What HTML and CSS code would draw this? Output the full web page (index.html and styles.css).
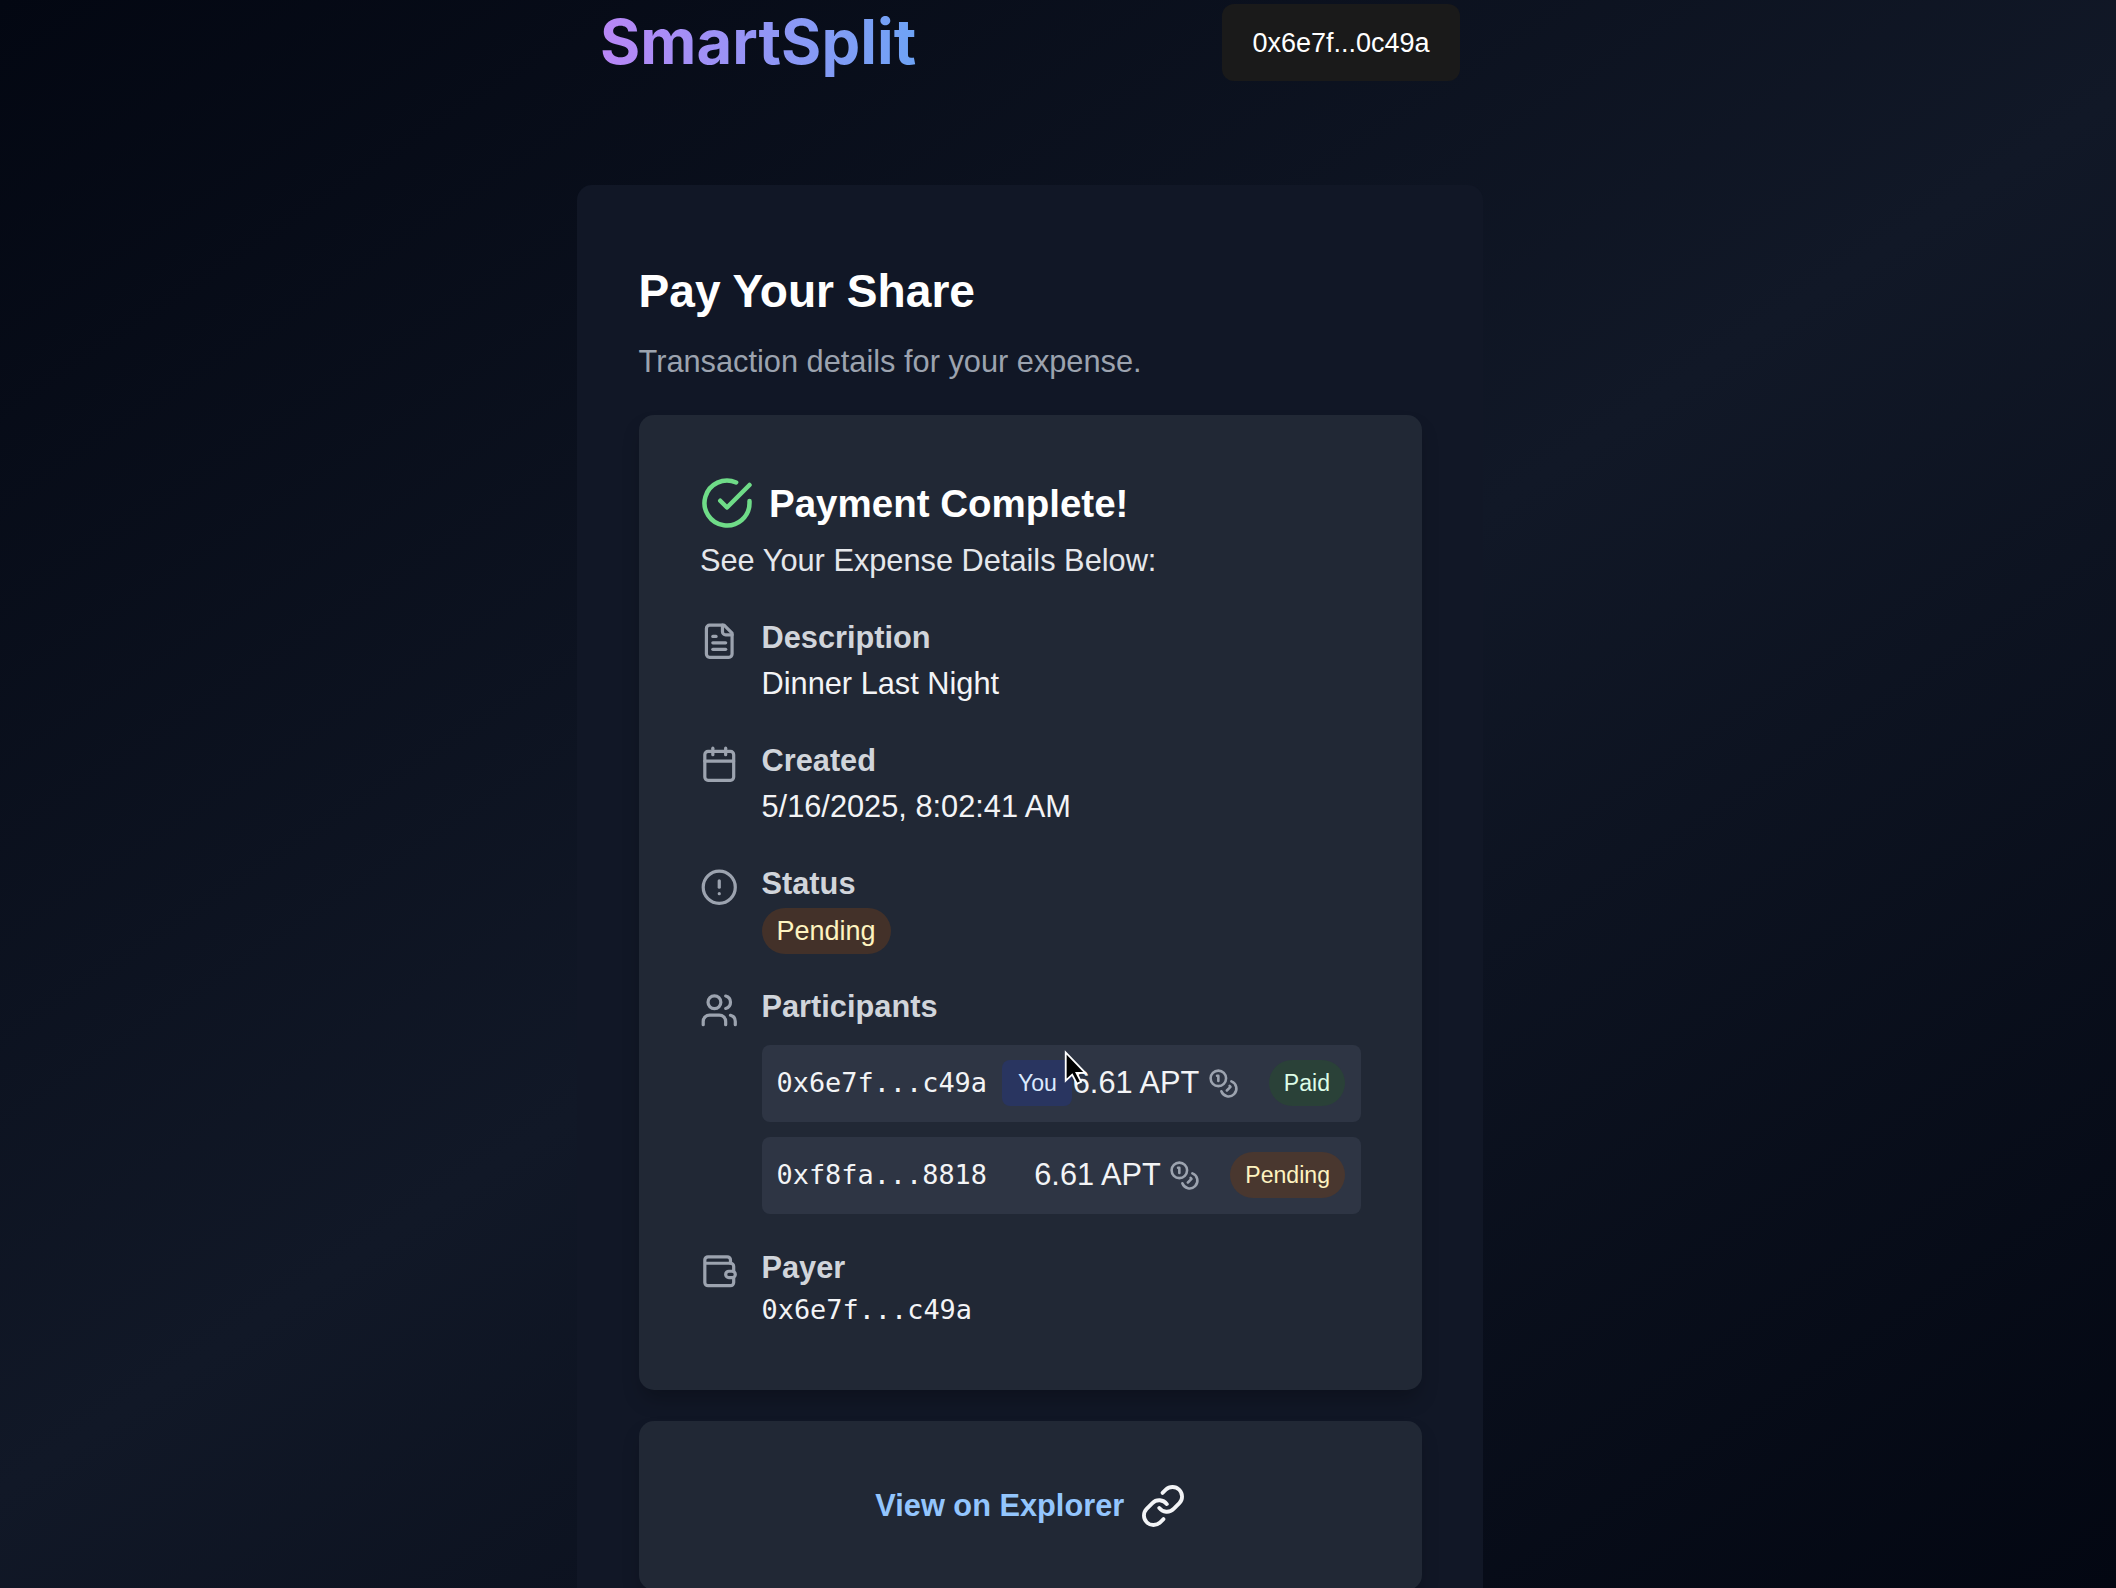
FILE: index.html
```html
<!DOCTYPE html>
<html lang="en">
<head>
<meta charset="utf-8">
<title>SmartSplit</title>
<link rel="stylesheet" href="styles.css">
</head>
<body>
<div class="page">
  <header class="header">
    <h1 class="brand">SmartSplit</h1>
    <button class="wallet-button">0x6e7f...0c49a</button>
  </header>
  <main class="panel">
    <h2 class="panel-title">Pay Your Share</h2>
    <p class="panel-subtitle">Transaction details for your expense.</p>
    <section class="card">
      <div class="card-heading">
        <svg class="icon icon-success" viewBox="0 0 24 24"><path d="M22 11.08V12a10 10 0 1 1-5.93-9.14"/><path d="m9 11 3 3L22 4"/></svg>
        <h3 class="card-title">Payment Complete!</h3>
      </div>
      <p class="card-intro">See Your Expense Details Below:</p>
      <div class="details">
        <div class="detail">
          <svg class="icon" viewBox="0 0 24 24"><path d="M15 2H6a2 2 0 0 0-2 2v16a2 2 0 0 0 2 2h12a2 2 0 0 0 2-2V7Z"/><path d="M14 2v4a2 2 0 0 0 2 2h4"/><path d="M10 9H8"/><path d="M16 13H8"/><path d="M16 17H8"/></svg>
          <div class="detail-body"><p class="label">Description</p><p class="value">Dinner Last Night</p></div>
        </div>
        <div class="detail">
          <svg class="icon" viewBox="0 0 24 24"><path d="M8 2v4"/><path d="M16 2v4"/><rect width="18" height="18" x="3" y="4" rx="2"/><path d="M3 10h18"/></svg>
          <div class="detail-body"><p class="label">Created</p><p class="value">5/16/2025, 8:02:41 AM</p></div>
        </div>
        <div class="detail">
          <svg class="icon" viewBox="0 0 24 24"><circle cx="12" cy="12" r="10"/><path d="M12 8v4"/><path d="M12 16h.01"/></svg>
          <div class="detail-body"><p class="label">Status</p><span class="badge badge-pending badge-status">Pending</span></div>
        </div>
        <div class="detail">
          <svg class="icon" viewBox="0 0 24 24"><path d="M16 21v-2a4 4 0 0 0-4-4H6a4 4 0 0 0-4 4v2"/><circle cx="9" cy="7" r="4"/><path d="M22 21v-2a4 4 0 0 0-3-3.87"/><path d="M16 3.13a4 4 0 0 1 0 7.75"/></svg>
          <div class="detail-body">
            <p class="label">Participants</p>
            <ul class="participants">
              <li class="participant">
                <span class="address address-self">0x6e7f...c49a<span class="you-tag">You</span></span>
                <span class="amount">6.61 APT
                  <svg class="icon coins" viewBox="0 0 24 24"><circle cx="8" cy="8" r="6"/><path d="M18.09 10.37A6 6 0 1 1 10.34 18"/><path d="M7 6h1v4"/><path d="m16.71 13.88.7.71-2.82 2.82"/></svg>
                </span>
                <span class="badge badge-paid">Paid</span>
              </li>
              <li class="participant">
                <span class="address">0xf8fa...8818</span>
                <span class="amount">6.61 APT
                  <svg class="icon coins" viewBox="0 0 24 24"><circle cx="8" cy="8" r="6"/><path d="M18.09 10.37A6 6 0 1 1 10.34 18"/><path d="M7 6h1v4"/><path d="m16.71 13.88.7.71-2.82 2.82"/></svg>
                </span>
                <span class="badge badge-pending">Pending</span>
              </li>
            </ul>
          </div>
        </div>
        <div class="detail">
          <svg class="icon" viewBox="0 0 24 24"><path d="M21 12V9a2 2 0 0 0-2-2H4"/><path d="M21 16v3a2 2 0 0 1-2 2H5a2 2 0 0 1-2-2V5a2 2 0 0 1 2-2h12a2 2 0 0 1 2 2v2"/><rect x="16" y="12" width="6" height="4" rx="2"/></svg>
          <div class="detail-body"><p class="label">Payer</p><p class="payer-address">0x6e7f...c49a</p></div>
        </div>
      </div>
    </section>
    <section class="card explorer">
      <a class="explorer-link">View on Explorer</a>
      <svg class="icon icon-link" viewBox="0 0 24 24"><path d="M10 13a5 5 0 0 0 7.54.54l3-3a5 5 0 0 0-7.07-7.07l-1.72 1.71"/><path d="M14 11a5 5 0 0 0-7.54-.54l-3 3a5 5 0 0 0 7.07 7.07l1.71-1.71"/></svg>
    </section>
  </main>
</div>
<svg class="cursor" viewBox="0 0 20 30"><path d="M1.5 1.5V26l5.6-5.2 4.2 8 3.6-1.8-4-7.8h7.6Z" fill="#000" stroke="#fff" stroke-width="1.6"/></svg>
</body>
</html>
```
FILE: styles.css
```css
* { box-sizing: border-box; margin: 0; padding: 0; }
html, body { height: 100%; overflow: hidden; }
body {
  background: linear-gradient(146.6deg, #030712, #111827 50%, #030712);
  font-family: "Liberation Sans", Arial, sans-serif;
  font-size: 30.75px;
  line-height: 46px;
  color: #f3f4f6;
}
.page { width: 906px; height: 1588px; margin-left: 577px; display: flex; flex-direction: column; }
.header {
  flex: none;
  height: 184.5px;
  padding: 4px 23px 0;
  display: flex;
  justify-content: space-between;
  align-items: flex-start;
}
.brand {
  font: 700 61.5px/76px Inter, sans-serif;
  letter-spacing: 0.05px;
  background: linear-gradient(to right, #b987f6, #6ea3f5);
  -webkit-background-clip: text;
  background-clip: text;
  color: transparent;
}
.wallet-button {
  width: 238px;
  height: 77px;
  border: 0;
  border-radius: 12px;
  background: #1a1a1a;
  color: #fff;
  font: 27px/46px "Liberation Sans", Arial, sans-serif;
}
.panel {
  flex: 1;
  padding: 76px 61px 0 61.5px;
  border-radius: 15px 15px 0 0;
  background: #111726;
}
.panel-title { font-size: 46.1px; line-height: 61px; color: #fff; }
.panel-subtitle { margin-top: 17px; color: #9ca3af; line-height: 46px; }
.card {
  margin-top: 30.5px;
  padding: 61px 61px 61px 61.5px;
  border-radius: 15px;
  background: #212835;
  box-shadow: 0 12px 20px -4px rgba(0,0,0,.25);
}
.card-heading { display: flex; align-items: center; gap: 15px; height: 54px; }
.card-title { font-size: 38.5px; line-height: 55px; color: #fff; }
.icon {
  flex: none;
  width: 38.5px;
  height: 38.5px;
  fill: none;
  stroke: #9ca3af;
  stroke-width: 2;
  stroke-linecap: round;
  stroke-linejoin: round;
}
.icon-success { width: 54px; height: 54px; stroke: #6fdc88; }
.card-intro { margin-top: 7.5px; color: #e5e7eb; }
.details { display: flex; flex-direction: column; gap: 31px; margin-top: 31px; }
.detail { display: flex; gap: 23px; }
.detail > .icon { margin-top: 7.5px; }
.detail-body { flex: 1; }
.label { font-weight: 700; color: #d1d5db; }
.participants { list-style: none; display: flex; flex-direction: column; gap: 15px; margin-top: 15px; }
.participant {
  display: flex;
  align-items: center;
  height: 77px;
  padding: 0 16px 0 15px;
  border-radius: 8px;
  background: #2e3544;
}
.address, .payer-address { font-family: "DejaVu Sans Mono", monospace; font-size: 26.9px; }
.address { line-height: 44px; }
.payer-address { line-height: 37px; margin-bottom: 1px; }
.badge {
  display: block;
  width: max-content;
  padding: 0 15px;
  border-radius: 23px;
  font-size: 23.1px;
}
.badge-pending { background: #49372f; color: #fef3c0; }
.badge-status { position: relative; top: 1px; font-size: 27px; background: #433129; }
.badge-paid { background: #2a4138; color: #dcfce7; }
.address-self { display: flex; align-items: center; width: 211px; }
.you-tag {
  flex: none;
  margin-left: 15.5px;
  padding: 0 15.5px;
  border-radius: 8px;
  background: #293560;
  color: #dbeafe;
  font: 23.1px/46px "Liberation Sans", Arial, sans-serif;
}
.amount { display: flex; align-items: center; gap: 8.5px; margin: 0 30px 0 auto; z-index: 1; }
.coins { width: 31px; height: 31px; }
.explorer { display: flex; justify-content: center; align-items: center; gap: 15.5px; height: 169px; margin-top: 31.5px; }
.explorer-link { color: #93c5fd; font-weight: 700; }
.icon-link { width: 46px; height: 46px; stroke: #f3f4f6; }
.cursor { position: absolute; left: 1064px; top: 1050px; width: 23px; height: 36px; z-index: 5; }
```
